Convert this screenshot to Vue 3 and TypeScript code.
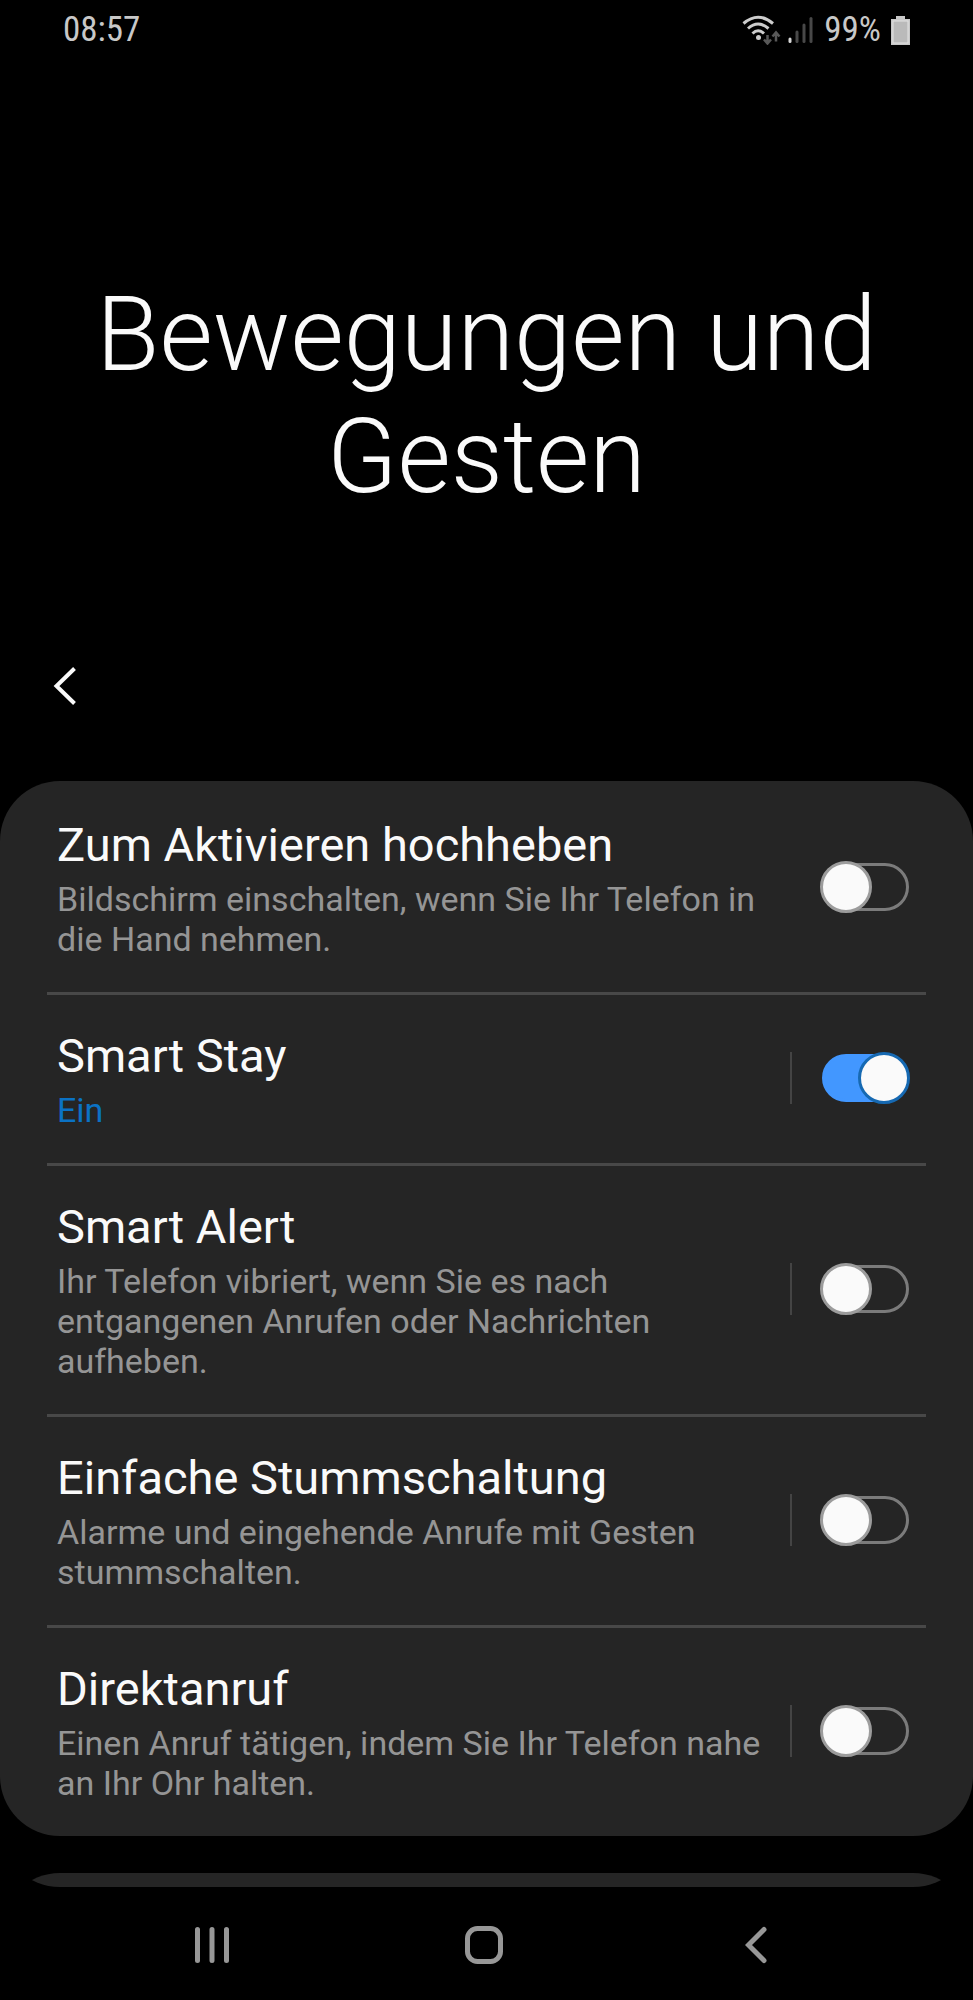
<script setup lang="ts">
import { ref } from 'vue'

interface Setting {
  id: string
  title: string
  summary: string
  enabled: boolean
  showsState: boolean
  separated: boolean
}

const settings = ref<Setting[]>([
  {
    id: 'lift-to-wake',
    title: 'Zum Aktivieren hochheben',
    summary: 'Bildschirm einschalten, wenn Sie Ihr Telefon in die Hand nehmen.',
    enabled: false,
    showsState: false,
    separated: false,
  },
  {
    id: 'smart-stay',
    title: 'Smart Stay',
    summary: 'Ein',
    enabled: true,
    showsState: true,
    separated: true,
  },
  {
    id: 'smart-alert',
    title: 'Smart Alert',
    summary: 'Ihr Telefon vibriert, wenn Sie es nach entgangenen Anrufen oder Nachrichten aufheben.',
    enabled: false,
    showsState: false,
    separated: true,
  },
  {
    id: 'easy-mute',
    title: 'Einfache Stummschaltung',
    summary: 'Alarme und eingehende Anrufe mit Gesten stummschalten.',
    enabled: false,
    showsState: false,
    separated: true,
  },
  {
    id: 'direct-call',
    title: 'Direktanruf',
    summary: 'Einen Anruf tätigen, indem Sie Ihr Telefon nahe an Ihr Ohr halten.',
    enabled: false,
    showsState: false,
    separated: true,
  },
])
</script>

<template>
  <div class="screen">
    <div class="status">
      <span>08:57</span>
      <div class="status-icons">
        <svg class="wifi" width="40" height="30" viewBox="0 0 40 30" aria-hidden="true">
          <g fill="none" stroke="#cdcdcd" stroke-width="3">
            <path d="M1.5 8.500Q16 -4 31 8.500" />
            <path d="M6 13.500Q16 4.500 26.500 13.500" />
            <path d="M10.500 18.500Q16 13 22 18.500" />
          </g>
          <circle cx="16.500" cy="22.500" r="2.500" fill="#cdcdcd" />
          <g fill="none" stroke="#585858" stroke-width="2.500">
            <path d="M25.500 20V28M22 24.500L25.500 28.500L29 24.500" />
            <path d="M34 26.500V18M30.500 21.500L34 17.500L37.500 21.500" />
          </g>
        </svg>
        <svg class="signal" width="26" height="28" viewBox="0 0 26 28" aria-hidden="true">
          <g fill="none" stroke="#484848" stroke-width="3" stroke-linecap="round">
            <path d="M2 23V25.500" stroke="#d8d8d8" />
            <path d="M9 16V25.500" />
            <path d="M16 9V25.500" />
            <path d="M23 2.500V25.500" />
          </g>
        </svg>
        <span>99%</span>
        <svg class="battery" width="19" height="29" viewBox="0 0 19 29" aria-hidden="true">
          <path d="M5 0H14V3H19V29H0V3H5Z" fill="#c8c8c8" />
          <rect x="2" y="5" width="15" height="22" fill="#bababa" stroke="#e2e2e2" />
        </svg>
      </div>
    </div>

    <header class="header">
      <h1>Bewegungen und Gesten</h1>
      <button class="up" type="button" aria-label="Nach oben">
        <svg width="24" height="40" viewBox="0 0 24 40" aria-hidden="true">
          <path d="M21.500 2.500L3.500 20L21.500 37.500" fill="none" stroke="#fafafa" stroke-width="4" />
        </svg>
      </button>
    </header>

    <main class="viewport">
      <section class="card list">
        <div v-for="item in settings" :key="item.id" class="row">
          <label class="text" :for="item.id">
            <span class="title">{{ item.title }}</span>
            <span class="summary" :class="{ state: item.showsState }">{{ item.summary }}</span>
          </label>
          <div class="control" :class="{ separated: item.separated }">
            <input :id="item.id" v-model="item.enabled" class="switch" type="checkbox" role="switch" />
          </div>
        </div>
      </section>
      <div class="peek">
        <section class="card next"></section>
      </div>
    </main>

    <nav class="nav">
      <button type="button" aria-label="Letzte Apps">
        <svg width="36" height="38" viewBox="0 0 36 38" aria-hidden="true">
          <path d="M3.500 3.500V34.500M18 3.500V34.500M32.500 3.500V34.500" stroke="#979797" stroke-width="5" stroke-linecap="round" />
        </svg>
      </button>
      <button type="button" aria-label="Startseite">
        <svg width="38" height="38" viewBox="0 0 38 38" aria-hidden="true">
          <rect x="2.500" y="2.500" width="33" height="33" rx="10" fill="none" stroke="#979797" stroke-width="5" />
        </svg>
      </button>
      <button type="button" aria-label="Zurück">
        <svg width="22" height="38" viewBox="0 0 22 38" aria-hidden="true">
          <path d="M19 3.500L3.500 19L19 34.500" fill="none" stroke="#979797" stroke-width="5" stroke-linecap="round" />
        </svg>
      </button>
    </nav>
  </div>
</template>

<style>
html,
body {
  margin: 0;
  background: #000;
}
</style>

<style scoped>
.screen {
  display: flex;
  flex-direction: column;
  min-height: 100vh;
  background: #000;
  color: #fafafa;
  font-family: Roboto, "Liberation Sans", sans-serif;
}

button {
  display: flex;
  align-items: center;
  justify-content: center;
  margin: 0;
  padding: 0;
  border: 0;
  background: none;
  cursor: pointer;
}

.status {
  display: flex;
  align-items: center;
  justify-content: space-between;
  height: 60px;
  padding: 0 63px;
  color: #c8c8c8;
  font-family: "Roboto Condensed", Roboto, sans-serif;
  font-size: 35px;
  line-height: 40px;
}

.status-icons {
  display: flex;
  align-items: center;
}

.wifi {
  margin-right: 6px;
}

.signal {
  margin-right: 10px;
}

.battery {
  margin-left: 10px;
}

.header {
  display: flex;
  flex-direction: column;
  gap: 128px;
  padding: 214px 40px 55px;
}

h1 {
  margin: 0;
  font-size: 103px;
  font-weight: 300;
  line-height: 122px;
  text-align: center;
}

.up {
  width: 50px;
  height: 80px;
}

.viewport {
  display: flex;
  flex-direction: column;
  gap: 37px;
  overflow: hidden;
  border-radius: 0 0 60px 60px;
}

.card {
  border-radius: 60px;
  background: #252525;
}

.list {
  padding: 3px 47px 0;
}

.peek {
  height: 14px;
  overflow: hidden;
}

.next {
  height: 120px;
}

.row {
  display: flex;
  align-items: center;
  justify-content: space-between;
}

.row + .row {
  border-top: 3px solid #484848;
}

.text {
  display: flex;
  flex: 1;
  flex-direction: column;
  gap: 7px;
  padding: 34px 20px 33px 10px;
}

.title {
  font-size: 47px;
  line-height: 54px;
}

.summary {
  color: #959595;
  font-size: 34px;
  line-height: 40px;
}

.summary.state {
  color: #0b72c4;
}

.control {
  display: flex;
  align-items: center;
  height: 52px;
  margin-bottom: 3px;
  padding: 0 16px 0 28px;
  border-left: 2px solid transparent;
}

.control.separated {
  border-left-color: #444;
}

.switch {
  display: grid;
  align-items: center;
  width: 90px;
  height: 52px;
  margin: 0;
  appearance: none;
  cursor: pointer;
}

.switch::before,
.switch::after {
  grid-area: 1 / 1;
  box-sizing: border-box;
  content: "";
}

.switch::before {
  height: 48px;
  margin: 0 1px 0 2px;
  border: 3px solid #7b7b7b;
  border-radius: 24px;
}

.switch::after {
  width: 52px;
  height: 52px;
  border: 3px solid #9c9c9c;
  border-radius: 50%;
  background: #fafafa;
}

.switch:checked::before {
  border-color: #4297ff;
  background: #4297ff;
}

.switch:checked::after {
  justify-self: end;
  border-color: #1669b2;
}

.nav {
  display: grid;
  grid-template-columns: repeat(3, 1fr);
  min-height: 113px;
  padding: 2px 81px 0 76px;
  box-sizing: border-box;
}
</style>
